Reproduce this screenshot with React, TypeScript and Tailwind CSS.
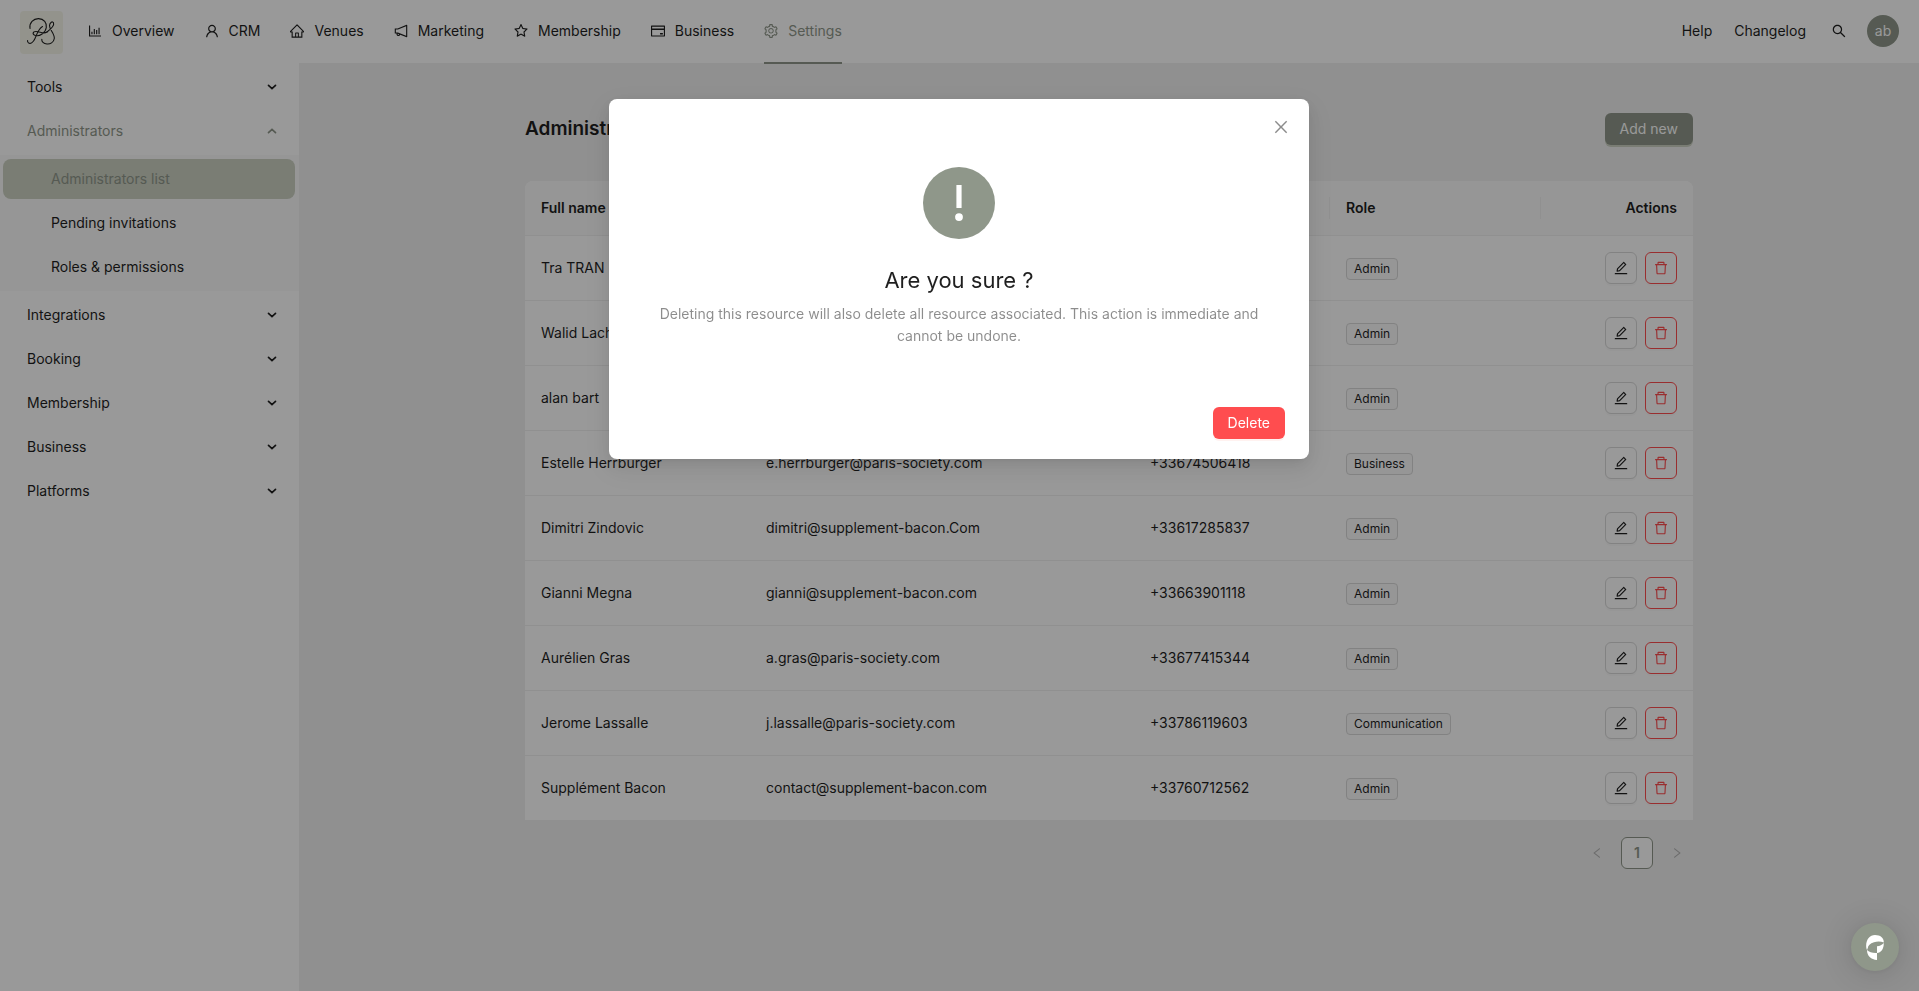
import React from "react";
import {
  AiOutlineBarChart,
  AiOutlineUser,
  AiOutlineHome,
  AiOutlineNotification,
  AiOutlineStar,
  AiOutlineCreditCard,
  AiOutlineSetting,
  AiOutlineSearch,
  AiOutlineEdit,
  AiOutlineDelete,
  AiOutlineClose,
  AiOutlineLeft,
  AiOutlineRight,
} from "react-icons/ai";

const navItems = [
  { label: "Overview", Icon: AiOutlineBarChart },
  { label: "CRM", Icon: AiOutlineUser },
  { label: "Venues", Icon: AiOutlineHome },
  { label: "Marketing", Icon: AiOutlineNotification },
  { label: "Membership", Icon: AiOutlineStar },
  { label: "Business", Icon: AiOutlineCreditCard },
  { label: "Settings", Icon: AiOutlineSetting, active: true },
];

const admins = [
  { name: "Tra TRAN", email: "", phone: "", role: "Admin" },
  { name: "Walid Lach", email: "", phone: "", role: "Admin" },
  { name: "alan bart", email: "", phone: "", role: "Admin" },
  { name: "Estelle Herrburger", email: "e.herrburger@paris-society.com", phone: "+33674506418", role: "Business" },
  { name: "Dimitri Zindovic", email: "dimitri@supplement-bacon.Com", phone: "+33617285837", role: "Admin" },
  { name: "Gianni Megna", email: "gianni@supplement-bacon.com", phone: "+33663901118", role: "Admin" },
  { name: "Aurélien Gras", email: "a.gras@paris-society.com", phone: "+33677415344", role: "Admin" },
  { name: "Jerome Lassalle", email: "j.lassalle@paris-society.com", phone: "+33786119603", role: "Communication" },
  { name: "Supplément Bacon", email: "contact@supplement-bacon.com", phone: "+33760712562", role: "Admin" },
];

function Logo() {
  return (
    <svg viewBox="0 0 43 43" className="mt-[11px] size-[43px] self-start rounded bg-[#f5f6ea]" role="img" aria-label="Paris Society">
      <g fill="none" stroke="#1f1f1f" strokeWidth="1.1" strokeLinecap="round" strokeLinejoin="round">
        <path d="M10 17.5 C9 12 13.5 7.5 18.500 7.600 C24 7.800 27 12 26.300 16.500 C25.500 22 19.500 25.500 15.500 24.500 C12 23.500 12.500 20.500 16 20.500 C20 20.500 23.500 23.500 27 21" />
        <path d="M22.500 15.500 C18.500 17.500 17 23 15 27.500 C13.500 31 10.500 33.500 8.500 31.800 C7.400 30.800 7.400 30 7.600 29.500" />
        <path d="M27 21 C31 18 34.500 14.500 33.500 11.800 C32.600 9.800 29.800 11.200 29.500 14.500 C29.200 18.500 34.800 22.500 34.300 27.500 C33.800 31.500 30 33.300 27 33 C23.500 32.700 21.500 30.500 21.800 28.200" />
      </g>
    </svg>
  );
}

function Chevron({ up = false }: { up?: boolean }) {
  return (
    <svg viewBox="0 0 10 6" className="h-1.5 w-2.5" fill="none" stroke="currentColor" strokeWidth="1.7" strokeLinecap="round">
      <path d={up ? "M1.500 4.700 L5 1.400 L8.500 4.700" : "M1.500 1.300 L5 4.600 L8.500 1.300"} />
    </svg>
  );
}

function MenuGroup({ label, open = false }: { label: string; open?: boolean }) {
  return (
    <button
      type="button"
      aria-expanded={open}
      className={
        open
          ? "flex h-10 items-center justify-between rounded-lg pr-[19px] pl-6 text-[#8f978a]"
          : "flex h-10 items-center justify-between rounded-lg pr-[19px] pl-6"
      }
    >
      {label}
      <Chevron up={open} />
    </button>
  );
}

function Header() {
  return (
    <header className="flex h-[63px] items-center justify-between bg-white pr-5 pl-5">
      <div className="flex h-full items-center gap-[25px]">
        <Logo />
        <nav className="flex h-full gap-[30px]">
          {navItems.map(({ label, Icon, active }) => (
            <a
              key={label}
              href="#"
              className={
                active
                  ? "relative flex h-full items-center gap-2.5 pb-0.5 text-[#8f978a] after:absolute after:inset-x-0 after:-bottom-px after:h-0.5 after:bg-[#8f978a]"
                  : "flex h-full items-center gap-2.5 pb-0.5"
              }
            >
              <Icon className="size-3.5" viewBox="64 64 896 896" />
              {label}
            </a>
          ))}
        </nav>
      </div>
      <div className="flex items-center pb-0.5">
        <a href="#" className="mr-[22px]">Help</a>
        <a href="#" className="mr-[26px]">Changelog</a>
        <button type="button" aria-label="Search" className="mr-[21px]">
          <AiOutlineSearch className="size-3.5" viewBox="64 64 896 896" />
        </button>
        <span className="flex size-8 items-center justify-center rounded-full bg-[#8f978a] text-white">ab</span>
      </div>
    </header>
  );
}

function Sidebar() {
  return (
    <aside className="w-[299px] shrink-0 bg-white pt-1">
      <nav className="flex flex-col">
        <div className="flex flex-col gap-1 px-[3px] pb-1">
          <MenuGroup label="Tools" />
          <MenuGroup label="Administrators" open />
        </div>
        <div className="flex flex-col gap-1 bg-[#fafafa] py-1 pr-1 pl-[3px]">
          <a href="#" className="flex h-10 items-center rounded-lg bg-[#cbd0c2] pl-12 text-[#8f978a]">Administrators list</a>
          <a href="#" className="flex h-10 items-center rounded-lg pl-12">Pending invitations</a>
          <a href="#" className="flex h-10 items-center rounded-lg pl-12">Roles &amp; permissions</a>
        </div>
        <div className="flex flex-col gap-1 px-[3px] pt-1">
          <MenuGroup label="Integrations" />
          <MenuGroup label="Booking" />
          <MenuGroup label="Membership" />
          <MenuGroup label="Business" />
          <MenuGroup label="Platforms" />
        </div>
      </nav>
    </aside>
  );
}

function AdminTable() {
  const divider = "h-[22px] border-r border-[#f0f0f0]";
  return (
    <table className="w-full table-fixed border-separate border-spacing-0 overflow-hidden rounded-t-lg bg-white">
      <colgroup>
        <col className="w-[225px]" />
        <col className="w-[384px]" />
        <col className="w-[196px]" />
        <col className="w-[211px]" />
        <col className="w-[152px]" />
      </colgroup>
      <thead className="bg-[#fafafa] text-left">
        <tr>
          {["Full name", "Email", "Phone", "Role"].map((h) => (
            <th key={h} className="border-b border-[#f0f0f0] py-4 pl-4 font-semibold">
              <div className={divider}>{h}</div>
            </th>
          ))}
          <th className="border-b border-[#f0f0f0] px-4 py-4 text-right font-semibold">Actions</th>
        </tr>
      </thead>
      <tbody>
        {admins.map((a) => (
          <tr key={a.name}>
            <td className="border-b border-[#f0f0f0] p-4">{a.name}</td>
            <td className="border-b border-[#f0f0f0] p-4">{a.email}</td>
            <td className="border-b border-[#f0f0f0] p-4">{a.phone}</td>
            <td className="border-b border-[#f0f0f0] p-4">
              <span className="inline-block rounded border border-[#d9d9d9] bg-[#fafafa] px-[7px] align-middle text-xs leading-5">
                {a.role}
              </span>
            </td>
            <td className="border-b border-[#f0f0f0] p-4">
              <div className="flex justify-end gap-2">
                <button
                  type="button"
                  aria-label={"Edit " + a.name}
                  className="flex size-8 items-center justify-center rounded-md border border-[#d9d9d9] bg-white shadow-[0_2px_0_rgba(0,0,0,0.02)]"
                >
                  <AiOutlineEdit className="size-3.5" viewBox="64 64 896 896" />
                </button>
                <button
                  type="button"
                  aria-label={"Delete " + a.name}
                  className="flex size-8 items-center justify-center rounded-md border border-[#ff4d4f] bg-white text-[#ff4d4f] shadow-[0_2px_0_rgba(0,0,0,0.02)]"
                >
                  <AiOutlineDelete className="size-3.5" viewBox="64 64 896 896" />
                </button>
              </div>
            </td>
          </tr>
        ))}
      </tbody>
    </table>
  );
}

function ConfirmDialog() {
  return (
    <div className="fixed inset-0 flex items-start justify-center bg-black/40 pt-[99px] pr-px">
      <div
        role="dialog"
        aria-modal="true"
        aria-labelledby="confirm-title"
        className="relative w-full max-w-[700px] rounded-lg bg-white px-6 py-5 shadow-[0_6px_16px_0_rgba(0,0,0,0.08),0_3px_6px_-4px_rgba(0,0,0,0.12),0_9px_28px_8px_rgba(0,0,0,0.05)]"
      >
        <button
          type="button"
          aria-label="Close"
          className="absolute top-[17px] right-[17px] flex size-[22px] items-center justify-center text-black/45"
        >
          <AiOutlineClose className="size-4" viewBox="64 64 896 896" />
        </button>
        <div className="flex flex-col items-center px-5 py-12 text-center">
          <svg viewBox="0 0 72 72" className="size-[72px]" aria-hidden="true">
            <circle cx="36" cy="36" r="36" fill="#8f978a" />
            <rect x="33.400" y="18" width="5.200" height="23.100" rx="0.500" fill="#fff" />
            <circle cx="36" cy="50.100" r="3.900" fill="#fff" />
          </svg>
          <h2 id="confirm-title" className="mt-[25px] text-[22px] leading-8">Are you sure ?</h2>
          <p className="mt-[7px] text-black/45">
            Deleting this resource will also delete all resource associated. This action is immediate and cannot be undone.
          </p>
        </div>
        <div className="mt-3 flex justify-end">
          <button
            type="button"
            className="h-8 rounded-md bg-[#ff4d4f] px-[15px] text-white shadow-[0_2px_0_rgba(255,38,5,0.06)]"
          >
            Delete
          </button>
        </div>
      </div>
    </div>
  );
}

function SupportButton() {
  return (
    <button
      type="button"
      aria-label="Support"
      className="fixed right-5 bottom-5 flex size-12 items-center justify-center rounded-full bg-[#8f978a] shadow-[0_1px_6px_rgba(0,0,0,0.06),0_2px_32px_rgba(0,0,0,0.16)]"
    >
      <svg viewBox="0 0 18 25" className="h-[25px] w-[18px]" fill="#fff" aria-hidden="true">
        <path d="M0.200 12 C-0.300 5 3.500 0 9 0 C14.500 0 18 3 17.800 7.500 C15 6.200 11 6.200 8 7.200 C4 8.500 2 10.500 1.800 13 L1 15 C0.500 14 0.300 13 0.200 12 Z" />
        <path d="M17.800 8 C17.900 14 15 17.800 11 18 L11 11.300 C14 11 16 10 17.800 8 Z" />
        <path d="M1 15 C3 17.200 7 18.300 11 18 L11 25 C5 24.500 1 21 1 15 Z" />
      </svg>
    </button>
  );
}

export default function App() {
  return (
    <div className="flex min-h-screen flex-col bg-[#f0f0f0] font-['Inter',sans-serif] text-sm leading-[22px] text-[#1f1f1f]">
      <Header />
      <div className="flex flex-1">
        <Sidebar />
        <main className="min-w-0 flex-1 px-4 pt-[50px] pb-6">
          <div className="mx-auto max-w-[1168px]">
            <div className="mb-9 flex items-center justify-between">
              <h1 className="text-[19px] leading-8 font-semibold">Administrators</h1>
              <button
                type="button"
                className="h-8 rounded-md bg-[#8f978a] px-[15px] text-white shadow-[0_2px_0_#cbd0c2]"
              >
                Add new
              </button>
            </div>
            <AdminTable />
            <div className="mt-4 flex justify-end gap-2">
              <button type="button" aria-label="Previous page" className="flex size-8 items-center justify-center text-black/25">
                <AiOutlineLeft className="size-3" viewBox="64 64 896 896" />
              </button>
              <button
                type="button"
                className="size-8 rounded-md border border-[#8f978a] bg-white font-semibold text-[#8f978a]"
              >
                1
              </button>
              <button type="button" aria-label="Next page" className="flex size-8 items-center justify-center text-black/25">
                <AiOutlineRight className="size-3" viewBox="64 64 896 896" />
              </button>
            </div>
          </div>
        </main>
      </div>
      <ConfirmDialog />
      <SupportButton />
    </div>
  );
}
